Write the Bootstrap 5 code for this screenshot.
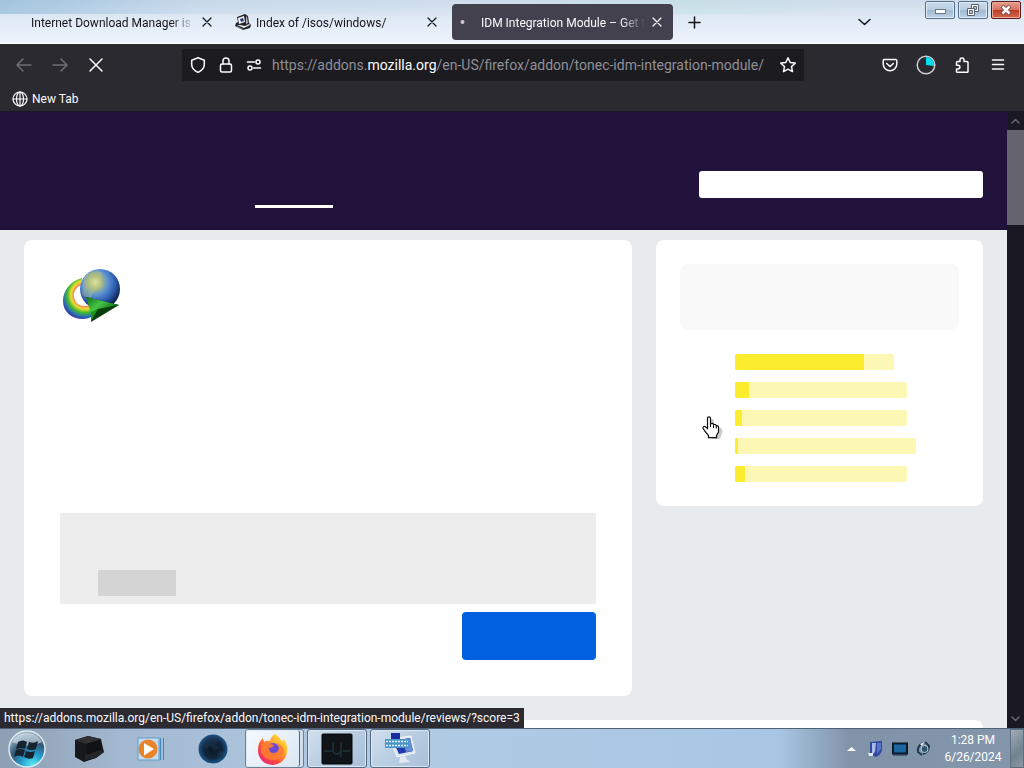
<!DOCTYPE html>
<html lang="en">
<head>
<meta charset="utf-8">
<meta name="viewport" content="width=device-width, initial-scale=1">
<title>IDM Integration Module – Get this Extension for Firefox</title>
<link href="https://cdn.jsdelivr.net/npm/bootstrap@5.3.0/dist/css/bootstrap.min.css" rel="stylesheet">
<style>
body{font-family:Roboto,"Open Sans",sans-serif;font-size:12px;line-height:16px;background:#e7ebee}
button{font:inherit}
svg{display:block;flex:none}
.line-icon{fill:none;stroke:currentColor;stroke-width:1.5;stroke-linecap:round;stroke-linejoin:round}
.thin{stroke-width:1.2}
.plain{border:0;background:none;padding:0;color:inherit;display:flex;align-items:center;justify-content:center}

/* tab strip */
.tab-strip{height:44px;padding:4px 0 4px 2px;color:#15141a;border-bottom:1px solid #fff;
  background:linear-gradient(90deg,rgba(110,165,205,.45),rgba(170,200,225,.2) 20%,rgba(255,255,255,0) 45%,rgba(190,225,225,.4) 68%,rgba(255,255,255,0) 82%) top/100% 14px no-repeat,linear-gradient(#cddceb,#e0eaf5 45%,#eef3fc)}
.tabs{gap:4px;min-width:0}
.tab-item{flex:0 1 221px;height:36px;padding:0 8px;border-radius:4px;min-width:0}
.tab-item.current{background:#42414d;color:#fbfbfe}
.tab-label{flex:1;margin-left:5px;margin-right:4px;padding-top:1px;overflow:hidden;white-space:nowrap;-webkit-mask-image:linear-gradient(90deg,#000 85%,transparent);mask-image:linear-gradient(90deg,#000 85%,transparent)}
.tab-icon{width:16px;height:16px;display:flex;align-items:center}
.list-tabs{margin-right:52px}
.win-controls{gap:3px;margin-top:-3px;padding-right:3px}
.win-btn{width:30px;height:18px;border:1px solid #56708c;border-radius:2px;background:linear-gradient(#cadbea,#b9cde1 50%,#9fb8d1 50%,#bcd2e6);box-shadow:inset 0 0 0 1px #dfeaf4}
.win-btn.close-win{border-color:#5b1a1a;background:linear-gradient(#e3a191,#d5705c 50%,#bd3a24 50%,#d46a50);box-shadow:inset 0 0 0 1px #eba99a}

/* toolbars */
.chrome{background:#2b2a30;color:#fbfbfe}
.nav-row{height:41px;padding:0 16px}
.nav-group{gap:20px;flex:none;width:166px}
.dim{color:#6d6c72}
.address{background:#1c1b20;height:32px;padding:0 8px;min-width:0}
.identity{gap:12px}
.url{margin-left:10px;font-size:14px;line-height:20px;color:#8f8f98;white-space:nowrap;overflow:hidden}
.url b{font-weight:400;color:#fbfbfe}
.tools{gap:18px;margin-left:78px}
.bookmark-row{height:27px;padding:1px 12px 0;border-bottom:1px solid #1b1626}
.bookmark-row a{color:#fbfbfe;text-decoration:none;gap:4px}

/* page */
.viewport{min-height:0}
.page{background:#e7ebee;overflow:hidden;min-width:0}
.site-head{background:#20123a;height:118px;padding:0 24px 22px}
.site-nav{margin-left:231px}
.site-nav a{display:block;width:78px;height:30px;border-bottom:3px solid #fff}
.site-search{width:284px;height:27px;margin-bottom:10px;border:0;border-radius:3px;background:#fff}
.page-grid{display:grid;grid-template-columns:65fr 35fr;gap:24px;padding:10px 24px;align-items:start}
.panel{background:#fff;border-radius:8px}
.addon-panel{min-height:456px;padding:24px 36px 36px}
.notice{background:#ededee;height:91px;padding:0 38px 8px;margin-bottom:8px;border-radius:2px}
.notice button{width:78px;height:26px;border:0;background:#d4d4d4}
.install{width:134px;height:48px;border:0;border-radius:4px;background:#0060df}
.rate-panel{padding:24px}
.summary{height:66px;border-radius:8px;background:#f9f9fa}
.score-list{margin:24px 0 0 55px;padding:0;list-style:none;display:grid;gap:12px}
.score-list .progress{height:16px;border-radius:2px;background:#fcf7b5}
.score-list .progress-bar{background:#fbec2d}
.wide-panel{grid-column:1/-1;height:120px}
.scroll-rail{width:17px;background:#1a1922;color:#65646d}
.scroll-rail button{height:18px;width:17px}
.scroll-thumb{height:95px;background:#65646d}
.link-status{position:absolute;left:0;bottom:0;background:#2b2a30;color:#fbfbfe;height:20px;line-height:20px;padding:0 4px;white-space:nowrap}
.hand{position:absolute;left:702px;top:304px}

/* taskbar */
.taskbar{height:40px;border-top:1px solid #4d6276;background:linear-gradient(90deg,#8d9fb2,#a3b9d1 12%,#b2cbe4 35%,#adc9e4 55%,#a8c6e4 76%,#8193a8 83%,#8496aa);padding-left:6px}
.taskbar .launch{width:62px}
.taskbar .orb{margin-right:10px}
.task-group{gap:3px;margin-left:1px}
.task-btn{width:60px;height:39px;border:1px solid #53687e;border-radius:3px;background:linear-gradient(135deg,#d0dfed,#b4cae0 60%,#a9c0d8);box-shadow:inset 0 0 0 1px #dce8f3}
.task-stack{width:59px;height:39px;border:1px solid #6b7f95;border-radius:3px;background:#cfdeed}
.task-stack .task-btn{width:54px;height:37px;border-width:0 1px 0 0;background:linear-gradient(135deg,#f6f9fd,#dbe6f3)}
.tray{gap:8px}
.clock{color:#fff;text-align:center;line-height:17px;width:66px}
.peek{width:14px;border:1px solid #5c6e7f;background:linear-gradient(135deg,#a1adb8,#718290 60%,#8c9aa6)}
</style>
</head>
<body>
<div class="d-flex flex-column vh-100 overflow-hidden">

  <div class="tab-strip d-flex">
    <div class="tabs d-flex flex-grow-1">
      <div class="tab-item d-flex align-items-center"><span class="tab-icon"></span><span class="tab-label">Internet Download Manager is</span>
        <button class="plain" aria-label="Close tab"><svg width="16" height="16" class="line-icon thin"><path d="M4 4l8 8m0-8l-8 8"/></svg></button></div>
      <div class="tab-item d-flex align-items-center"><span class="tab-icon">
        <svg width="16" height="16"><path d="M2 3l8-3 3 2 1 7 2 2-1 3-7 2-8-4 1-3 2-1z" fill="#23242b"/><path d="M3 4l6-2 1 6-6 2z" fill="#f5f6f7"/><path d="M5 5l3-1 1 3-3 1z" fill="#2c3770"/><path d="M11 2l1 1 1 6-2 1z" fill="#b5b7ba"/><path d="M2 11l3 0 5 1 4-2 1 1-6 3z" fill="#e8e9ea"/><path d="M2 12l6 3v1l-6-3z" fill="#8c8e92"/></svg></span>
        <span class="tab-label">Index of /isos/windows/</span>
        <button class="plain" aria-label="Close tab"><svg width="16" height="16" class="line-icon thin"><path d="M4 4l8 8m0-8l-8 8"/></svg></button></div>
      <div class="tab-item current d-flex align-items-center"><span class="tab-icon"><svg width="16" height="16"><circle cx="2.5" cy="8" r="2" fill="#c9c8d0"/></svg></span>
        <span class="tab-label">IDM Integration Module – Get t</span>
        <button class="plain" aria-label="Close tab"><svg width="16" height="16" class="line-icon thin"><path d="M4 4l8 8m0-8l-8 8"/></svg></button></div>
      <button class="plain ms-2" aria-label="New tab"><svg width="18" height="18" class="line-icon"><path d="M9.5 4v11M4 9.500h11"/></svg></button>
    </div>
    <button class="plain list-tabs" aria-label="List all tabs"><svg width="18" height="18" class="line-icon"><path d="M4 6.500l5.500 5L15 6.500"/></svg></button>
    <div class="win-controls d-flex align-items-start">
      <button class="plain win-btn" aria-label="Minimize"><svg width="16" height="12"><rect x="3.500" y="5.500" width="10" height="4" fill="#fff" stroke="#6b7787"/></svg></button>
      <button class="plain win-btn" aria-label="Restore"><svg width="16" height="14" fill="#fff" stroke="#566272"><path d="M6.500 1.500h7v7h-7z"/><path d="M8.500 3.500h3v3h-3z" fill="#b9cde1"/><path d="M2.500 5.500h7v7h-7z"/><path d="M4.500 7.500h3v3h-3z" fill="#b9cde1"/></svg></button>
      <button class="plain win-btn close-win" aria-label="Close"><svg width="14" height="12"><path d="M3 2l8 8m0-8l-8 8" stroke="#7b4a48" stroke-width="4.500"/><path d="M3.500 2.500l7 7m0-7l-7 7" stroke="#fff" stroke-width="2.500"/></svg></button>
    </div>
  </div>

  <div class="chrome">
    <div class="nav-row d-flex align-items-center">
      <div class="nav-group d-flex">
        <button class="plain dim" aria-label="Back"><svg width="16" height="16" class="line-icon"><path d="M7 2L1 8l6 6M1 8h14"/></svg></button>
        <button class="plain dim" aria-label="Forward"><svg width="16" height="16" class="line-icon"><path d="M9 2l6 6-6 6M15 8H1"/></svg></button>
        <button class="plain" aria-label="Stop"><svg width="16" height="16" class="line-icon"><path d="M2 2l12 12M14 2L2 14"/></svg></button>
      </div>
      <div class="address d-flex align-items-center flex-grow-1">
        <div class="identity d-flex">
          <svg width="16" height="16" class="line-icon"><path d="M8 .8l6.300 2.400v4.300c0 3.500-2.500 6.200-6.300 7.900-3.800-1.700-6.300-4.400-6.300-7.900V3.200z"/></svg>
          <svg width="16" height="16" class="line-icon"><rect x="2.500" y="7" width="11" height="8" rx="1.500"/><path d="M5 7V4a3 3 0 016 0v3"/></svg>
          <svg width="16" height="16" class="line-icon"><path d="M1.500 5h7M7.500 11h7"/><circle cx="12" cy="5" r="2"/><circle cx="4" cy="11" r="2"/></svg>
        </div>
        <div class="url flex-grow-1">https://addons.<b>mozilla.org</b>/en-US/firefox/addon/tonec-idm-integration-module/</div>
        <button class="plain" aria-label="Bookmark this page"><svg width="16" height="16" class="line-icon"><path d="M8 .9l2.200 4.600 5 .6-3.700 3.500 1 5L8 12.200l-4.500 2.400 1-5L.8 6.100l5-.6z"/></svg></button>
      </div>
      <div class="tools d-flex">
        <button class="plain" aria-label="Save to Pocket"><svg width="16" height="16" class="line-icon"><path d="M2.200 2.500h11.600q1 0 1 1V7a6.800 6.800 0 01-13.600 0V3.500q0-1 1-1z"/><path d="M4.700 6.500L8 9.500l3.300-3"/></svg></button>
        <button class="plain" aria-label="Downloads"><svg width="20" height="20"><circle cx="10" cy="10" r="8.800" fill="none" stroke="#cfced6" stroke-width="1.500"/><path d="M10 10V2a8 8 0 018 8q0 1-.2 1z" fill="#00ddee"/></svg></button>
        <button class="plain" aria-label="Extensions"><svg width="16" height="16" class="line-icon"><path d="M2.500 5.500q0-1 1-1H6V3a2 2 0 014 0v1.500h3q1 0 1 1v9q0 .8-1 .8H3.500q-1 0-1-.8V12H4a1.900 1.900 0 000-3.800H2.500z"/></svg></button>
        <button class="plain" aria-label="Menu"><svg width="20" height="16" class="line-icon"><path d="M4.500 3h11m-11 4.500h11m-11 4.500h11"/></svg></button>
      </div>
    </div>
    <div class="bookmark-row d-flex align-items-center"><a href="#" class="d-flex align-items-center"><svg width="16" height="16" class="line-icon thin"><circle cx="8" cy="8" r="7"/><ellipse cx="8" cy="8" rx="3.500" ry="7"/><path d="M1 8h14M8 1v14"/></svg>New Tab</a></div>
  </div>

  <div class="viewport d-flex flex-grow-1 position-relative">
    <main class="page flex-grow-1">
      <header class="site-head d-flex align-items-end justify-content-between">
        <nav class="site-nav"><a href="#" aria-label="Extensions"></a></nav>
        <input class="site-search" type="search" aria-label="Find add-ons">
      </header>
      <div class="page-grid">
        <section class="panel addon-panel d-flex flex-column">
          <svg width="64" height="64" viewBox="0 0 64 64">
            <defs>
              <radialGradient id="globe" cx=".38" cy=".33" r=".7"><stop offset="0" stop-color="#e9edb6"/><stop offset=".25" stop-color="#a4b784"/><stop offset=".45" stop-color="#5d93d6"/><stop offset=".72" stop-color="#2d5cad"/><stop offset="1" stop-color="#0b1b42"/></radialGradient>
              <radialGradient id="rainbow" gradientUnits="userSpaceOnUse" cx="25" cy="31" r="25"><stop offset=".3" stop-color="#d94535"/><stop offset=".45" stop-color="#f08a55"/><stop offset=".56" stop-color="#efdc35"/><stop offset=".7" stop-color="#48bd26"/><stop offset=".86" stop-color="#2870b5"/><stop offset="1" stop-color="#3b2d9d"/></radialGradient>
              <linearGradient id="arrow" x1="0" x2="1" y2=".6"><stop offset="0" stop-color="#126b17"/><stop offset=".5" stop-color="#44c645"/><stop offset="1" stop-color="#0b5a11"/></linearGradient>
            </defs>
            <path d="M22 14C10 17 3 27 3 37c0 11 9 18 20 18 6 0 11-3 15-8l-5-7c-7 3-15 3-18-4-3-6 0-12 6-15z" fill="url(#rainbow)"/>
            <circle cx="40" cy="25" r="20" fill="url(#globe)"/>
            <path d="M24 14q6-9 18-6l-1 6 1 8-7 5-6 9-7-6z" fill="#c4cc72" opacity=".35"/>
            <path d="M26 33l33 8-28 17 1-13z" fill="#07400c"/><path d="M26 33l33 8-21 4-7 4z" fill="url(#arrow)"/><path d="M31 48l7-3-7 12z" fill="#1b941f"/>
          </svg>
          <div class="notice mt-auto d-flex align-items-end"><button aria-label="Learn more"></button></div>
          <button class="install align-self-end" aria-label="Add to Firefox"></button>
        </section>
        <aside class="panel rate-panel">
          <div class="summary"></div>
          <ul class="score-list">
            <li><a href="#" aria-label="5 stars" class="progress" style="width:71%"><span class="progress-bar" style="width:81%"></span></a></li>
            <li><a href="#" aria-label="4 stars" class="progress" style="width:77%"><span class="progress-bar" style="width:8%"></span></a></li>
            <li><a href="#" aria-label="3 stars" class="progress" style="width:77%"><span class="progress-bar" style="width:4%"></span></a></li>
            <li><a href="#" aria-label="2 stars" class="progress" style="width:81%"><span class="progress-bar" style="width:2%"></span></a></li>
            <li><a href="#" aria-label="1 star" class="progress" style="width:77%"><span class="progress-bar" style="width:6%"></span></a></li>
          </ul>
        </aside>
        <section class="panel wide-panel"></section>
      </div>
    </main>
    <div class="scroll-rail d-flex flex-column">
      <button class="plain" aria-label="Scroll up"><svg width="11" height="8" class="line-icon" stroke-width="2"><path d="M2 6l3.500-3.500L9 6"/></svg></button>
      <div class="scroll-thumb"></div>
      <button class="plain mt-auto" aria-label="Scroll down"><svg width="11" height="8" class="line-icon" stroke-width="2"><path d="M2 2l3.500 3.500L9 2"/></svg></button>
    </div>
    <div class="link-status">https://addons.mozilla.org/en-US/firefox/addon/tonec-idm-integration-module/reviews/?score=3</div>
    <svg class="hand" width="22" height="25"><path d="M8 2q2 0 2 2v5l7 2q2 1 1 5l-2 6H8l-5-8q0-2 3 0V4q0-2 2-2z" fill="#8a8a99" opacity=".45" transform="translate(2 1)"/><path d="M5.500 12.500V2.500q0-1.700 1.500-1.700t1.500 1.700V8q2.500-1.500 3 .8 2.300-1 2.700 1 2.300-.6 2.300 1.700v4.500l-2 3.500v2.200h-8v-2.200L2.700 15 1 12q0-2 2-1.500z" fill="#fff" stroke="#111" stroke-width="1.200"/><path d="M8.500 7v4m3-2v3m2.800-2v2.500" stroke="#111" fill="none"/></svg>
  </div>

  <footer class="taskbar d-flex">
    <button class="plain orb" aria-label="Start"><svg width="42" height="38" viewBox="0 0 42 38"><defs><radialGradient id="orb" cx=".65" cy=".95" r=".95"><stop offset="0" stop-color="#55edf3"/><stop offset=".35" stop-color="#259acb"/><stop offset=".65" stop-color="#315777"/><stop offset="1" stop-color="#a6bac8"/></radialGradient></defs><circle cx="21" cy="19" r="18" fill="url(#orb)" stroke="#dbe8ef" stroke-width="1.500"/><path d="M6 12a17 17 0 0130 0q-14 7-30 0z" fill="#e1edf2" opacity=".55"/><path d="M12 12q5-3 9 0l-2 7q-4-2-9 0zm11 0q5 2 9-1l-2 8q-4 2-9 0zM10 20q4-2 9 0l-2 7q-4-3-9 0zm10 1q5 2 9 0l-2 7q-4 2-9-1z" fill="#17222f"/></svg></button>
    <button class="plain launch" aria-label="Explorer"><svg width="32" height="30"><path d="M2 6L15 2l13 3 2 9 1 4-8 6-12 4-9-5z" fill="#17181b"/><path d="M2 6L15 2l13 3-15 5z" fill="#303134"/><path d="M13 10l14-4 1 9-14 6z" fill="#111214"/><path d="M12 21l16-5 3 2-8 6-11 2z" fill="#242528"/></svg></button>
    <button class="plain launch" aria-label="Media Player"><svg width="30" height="28"><rect x="2" y="3" width="21" height="22" fill="#c4dcef" stroke="#5e9bc7"/><path d="M24.500 3v22m3-22v22" stroke="#3e8abb"/><circle cx="12" cy="14" r="9.500" fill="#e8832a"/><path d="M8 8l10 6-10 6.500z" fill="#fff"/></svg></button>
    <button class="plain launch" aria-label="Internet"><svg width="32" height="32"><defs><radialGradient id="night"><stop offset="0" stop-color="#0a1521"/><stop offset=".65" stop-color="#12273e"/><stop offset="1" stop-color="#1c568b"/></radialGradient></defs><circle cx="16" cy="16" r="14.500" fill="url(#night)"/><path d="M5 10q5-7 11-6l6 4-4 3 4 4-5 3-4-5-5 3zm15 11l5-3 2 2-5 5z" fill="#244463" opacity=".35"/></svg></button>
    <div class="task-group d-flex">
      <div class="task-stack"><button class="plain task-btn" aria-label="Firefox"><svg width="32" height="32" viewBox="0 0 32 32"><defs><linearGradient id="fox" x1="1" x2=".1" y2="1"><stop offset="0" stop-color="#fff04d"/><stop offset=".35" stop-color="#ffb22d"/><stop offset=".65" stop-color="#ff5038"/><stop offset="1" stop-color="#e31f83"/></linearGradient></defs><path d="M18 1q5 3 7 8l2-3q4 6 3 12a14.500 14.500 0 01-29-1Q1 9 6 5l1 4q3-2 6-1 1-5 5-7z" fill="url(#fox)"/><circle cx="16" cy="16.500" r="6.500" fill="#6947d8"/><path d="M4 11q6-3 9 0l4 1q-1 3-5 3 0 5 5 5 5-1 5-6-1-3-3-4 6 1 8 7 0 8-9 10-10 1-14-8z" fill="#ff7d2d" opacity=".9"/></svg></button></div>
      <button class="plain task-btn" aria-label="Monitor"><svg width="32" height="32"><rect x="1" y="1" width="30" height="30" rx="1" fill="#101318" stroke="#060709"/><path d="M3 18h8m11 0h7M12 9v7q0 5 4 5t4-5V9m0 7v8" fill="none" stroke="#1b343c" stroke-width="1.500"/></svg></button>
      <button class="plain task-btn" aria-label="On-Screen Keyboard"><svg width="34" height="32"><path d="M7 6l21-3 4 17-18 4z" fill="#d9e4ee" stroke="#f4f7fa"/><path d="M10 8l17-3 3 13-14 3z" fill="#2338ad"/><path d="M20 7l7-2 3 13-7 1z" fill="#668dd5"/><rect x="8" y="0" width="9" height="6" fill="#172ca0"/><rect x="2" y="6" width="24" height="9" fill="#4b94c9"/><path d="M3 8.500h22M3 12.500h22" stroke="#e5f2fa" stroke-width="1.500" stroke-dasharray="2 1"/><path d="M17 24l5-1 2 4 4 2-12 1z" fill="#e3e9ed"/></svg></button>
    </div>
    <div class="tray ms-auto d-flex align-items-center">
      <button class="plain me-1" aria-label="Show hidden icons"><svg width="9" height="6"><path d="M0 5l4.500-4L9 5z" fill="#fff"/></svg></button>
      <svg width="16" height="18"><path d="M2 2l12-1v9q-1 5-6 7l-6-2z" fill="#304aa3"/><path d="M4 3l4 0-1 9-3 3z" fill="#a9bae5"/><path d="M9 3h4v6l-4 5z" fill="#5573c9"/><path d="M0 13h5v3H1z" fill="#dfe7f5"/></svg>
      <svg width="16" height="14"><rect x="1" y="1.500" width="14" height="10" fill="#1d67a1" stroke="#0b1b2a" stroke-width="2"/><path d="M1 13h14" stroke="#182b3c"/></svg>
      <svg width="16" height="18" fill="none"><path d="M7 3Q1 6 2 12l4 3m1-1q6-2 6-8L9 2" stroke="#203b52" stroke-width="2"/><circle cx="8.500" cy="9" r="3.500" fill="#31546d" stroke="#b5c9d8"/><path d="M4 4l4-2-2 4z" fill="#f1f5f8"/></svg>
      <div class="clock">1:28 PM<br>6/26/2024</div>
    </div>
    <button class="peek p-0 ms-1" aria-label="Show desktop"></button>
  </footer>
</div>
<script src="https://cdn.jsdelivr.net/npm/bootstrap@5.3.0/dist/js/bootstrap.bundle.min.js"></script>
</body>
</html>
